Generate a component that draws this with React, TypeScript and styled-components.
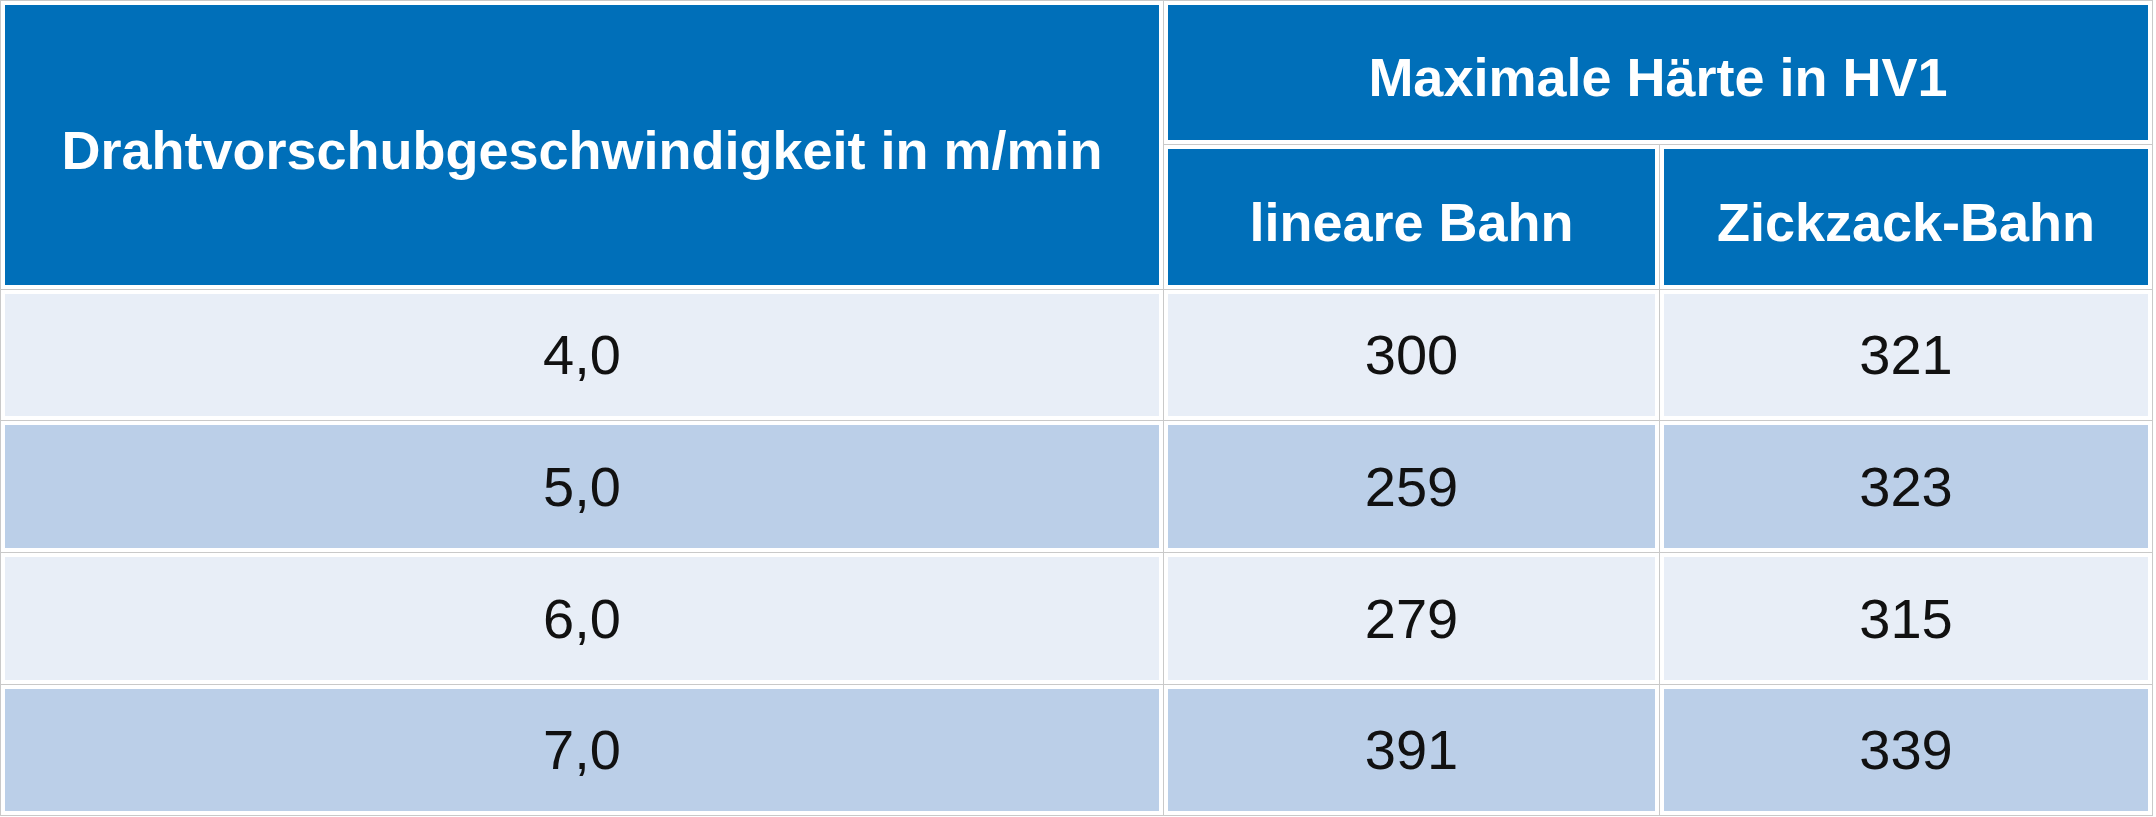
import React from "react";
import styled, { createGlobalStyle } from "styled-components";

const Global = createGlobalStyle`
  html, body {
    margin: 0;
    padding: 0;
    background: #ffffff;
  }
  body {
    font-family: "Liberation Sans", Arial, Helvetica, sans-serif;
  }
`;

const Grid = styled.div`
  display: grid;
  grid-template-columns: 1162px 495px 492px;
  grid-template-rows: 143px 144px 130px 131px 131px 130px;
  gap: 1px;
  padding: 1px;
  background: #c9c9c9;
  width: max-content;
`;

const Cell = styled.div<{ $col: string; $row: string }>`
  grid-column: ${(p) => p.$col};
  grid-row: ${(p) => p.$row};
  background: #ffffff;
  padding: 4px;
  display: flex;
`;

const Fill = styled.div<{ $tone: "head" | "light" | "mid" }>`
  flex: 1;
  display: flex;
  align-items: center;
  justify-content: center;
  background: ${(p) =>
    p.$tone === "head" ? "#006fb9" : p.$tone === "light" ? "#e8eef7" : "#bbcfe8"};
  color: ${(p) => (p.$tone === "head" ? "#ffffff" : "#111111")};
  font-size: ${(p) => (p.$tone === "head" ? "54px" : "56px")};
  font-weight: ${(p) => (p.$tone === "head" ? 700 : 400)};
  padding-top: ${(p) => (p.$tone === "head" ? "9px" : "0")};
  line-height: 1;
  white-space: nowrap;
`;

const rows = [
  ["4,0", "300", "321"],
  ["5,0", "259", "323"],
  ["6,0", "279", "315"],
  ["7,0", "391", "339"],
];

export default function App() {
  return (
    <>
      <Global />
      <Grid>
        <Cell $col="1" $row="1 / span 2">
          <Fill $tone="head">Drahtvorschubgeschwindigkeit in m/min</Fill>
        </Cell>
        <Cell $col="2 / span 2" $row="1">
          <Fill $tone="head">Maximale Härte in HV1</Fill>
        </Cell>
        <Cell $col="2" $row="2">
          <Fill $tone="head">lineare Bahn</Fill>
        </Cell>
        <Cell $col="3" $row="2">
          <Fill $tone="head">Zickzack-Bahn</Fill>
        </Cell>
        {rows.map((r, i) =>
          r.map((v, j) => (
            <Cell key={`${i}-${j}`} $col={String(j + 1)} $row={String(i + 3)}>
              <Fill $tone={i % 2 === 0 ? "light" : "mid"}>{v}</Fill>
            </Cell>
          ))
        )}
      </Grid>
    </>
  );
}
